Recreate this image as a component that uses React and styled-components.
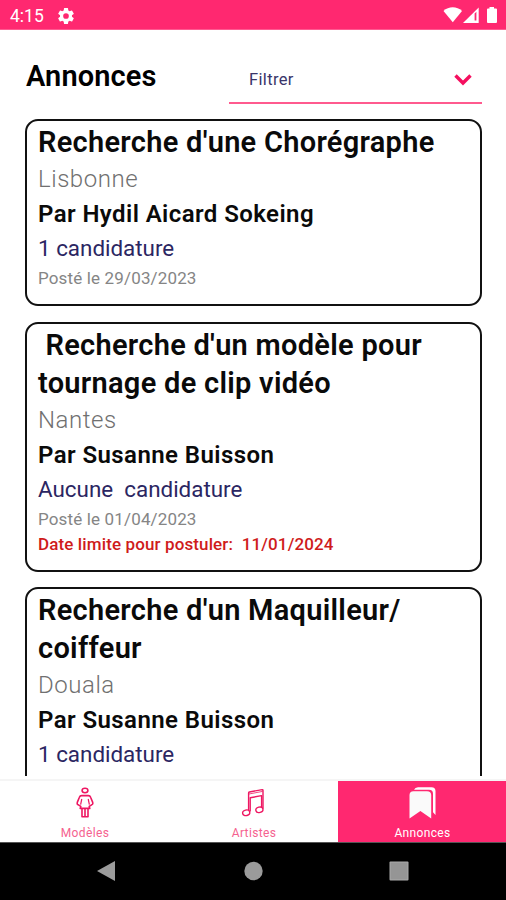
import React from "react";
import styled, { createGlobalStyle } from "styled-components";

const ads = [
  {
    title: "Recherche d'une Chorégraphe",
    city: "Lisbonne",
    author: "Hydil Aicard Sokeing",
    candidates: "1 candidature",
    posted: "29/03/2023",
  },
  {
    title: " Recherche d'un modèle pour\ntournage de clip vidéo",
    city: "Nantes",
    author: "Susanne Buisson",
    candidates: "Aucune  candidature",
    posted: "01/04/2023",
    deadline: "11/01/2024",
  },
  {
    title: "Recherche d'un Maquilleur/\ncoiffeur",
    city: "Douala",
    author: "Susanne Buisson",
    candidates: "1 candidature",
  },
];

const App = () => {
  return (
    <>
      <GlobalStyle />
      <Screen>
        <StatusBar>
          <Clock>4:15</Clock>
          <GearIcon />
          <StatusIcons />
        </StatusBar>
        <Header>
          <PageTitle>Annonces</PageTitle>
          <Filter>
            <span>Filtrer</span>
            <svg width="20" height="14" viewBox="0 0 20 14">
              <path d="M2.5 3.5 L10 11 L17.5 3.5" fill="none" stroke="#f50f5f" strokeWidth="3.4" />
            </svg>
          </Filter>
        </Header>
        <List>
          {ads.map((ad, index) => (
            <Card key={index}>
              <CardTitle>{ad.title}</CardTitle>
              <City>{ad.city}</City>
              <Author>Par {ad.author}</Author>
              <Candidates>{ad.candidates}</Candidates>
              {ad.posted && <Posted>Posté le {ad.posted}</Posted>}
              {ad.deadline && <Deadline>{"Date limite pour postuler:  " + ad.deadline}</Deadline>}
            </Card>
          ))}
        </List>
        <TabBar>
          <Tab>
            <WomanIcon />
            <TabLabel>Modèles</TabLabel>
          </Tab>
          <Tab>
            <MusicIcon />
            <TabLabel>Artistes</TabLabel>
          </Tab>
          <Tab $active>
            <BookmarksIcon />
            <TabLabel>Annonces</TabLabel>
          </Tab>
        </TabBar>
        <NavBar>
          <svg width="20" height="22" viewBox="0 0 20 22">
            <path d="M1 11 L19 1 V21 Z" fill="#9b9b9b" />
          </svg>
          <svg width="20" height="20" viewBox="0 0 20 20">
            <circle cx="10.5" cy="10" r="9.2" fill="#9b9b9b" />
          </svg>
          <svg width="20" height="20" viewBox="0 0 20 20">
            <rect x="0.5" y="0.5" width="19" height="19" rx="1" fill="#aaa" />
            <rect x="1.5" y="1.5" width="17" height="17" fill="#959595" />
          </svg>
        </NavBar>
      </Screen>
    </>
  );
};

const GearIcon = () => (
  <svg width="20" height="20" viewBox="0 0 24 24">
    <path
      fill="#fff"
      d="M19.14 12.94c.04-.3.06-.61.06-.94s-.02-.64-.07-.94l2.03-1.58a.49.49 0 0 0 .12-.61l-1.92-3.32a.49.49 0 0 0-.59-.22l-2.39.96c-.5-.38-1.03-.7-1.62-.94l-.36-2.54a.48.48 0 0 0-.48-.41h-3.84a.47.47 0 0 0-.47.41l-.36 2.54c-.59.24-1.13.57-1.62.94l-2.39-.96a.48.48 0 0 0-.59.22L2.74 8.87a.47.47 0 0 0 .12.61l2.03 1.58c-.05.3-.09.63-.09.94s.02.64.07.94l-2.03 1.58a.49.49 0 0 0-.12.61l1.92 3.32c.12.22.37.29.59.22l2.39-.96c.5.38 1.03.7 1.62.94l.36 2.54c.05.24.24.41.48.41h3.84c.24 0 .44-.17.47-.41l.36-2.54c.59-.24 1.13-.56 1.62-.94l2.39.96c.22.08.47 0 .59-.22l1.92-3.32a.47.47 0 0 0-.12-.61zM12 15.4a3.4 3.4 0 1 1 0-6.8 3.4 3.4 0 0 1 0 6.8z"
    />
  </svg>
);

// wifi, mobile signal and battery
const StatusIcons = () => (
  <StatusSvg width="56" height="20" viewBox="0 0 56 20">
    <path d="M0.5 6 C5.5 1 14 1 19 6 L9.8 17.3 Z" fill="#fff" />
    <path d="M20 18 L35.7 2.5 V18 Z" fill="#fff" />
    <path d="M31.6 8.5 L33.4 6.7 V15.6 H31.6 Z" fill="#ff2870" />
    <path d="M46.5 2 H51 V3.5 H53 Q54 3.5 54 4.5 V17 Q54 18 53 18 H45 Q44 18 44 17 V4.5 Q44 3.5 45 3.5 H46.5 Z" fill="#fff" />
  </StatusSvg>
);

const WomanIcon = () => (
  <svg width="32" height="34" viewBox="0 0 32 34" fill="none" stroke="#ee1762" strokeWidth="1.6" strokeLinejoin="round">
    <ellipse cx="16" cy="4.5" rx="2.9" ry="2.2" />
    <path d="M12.6 9.6 H19.4 Q21 9.6 21.6 11.3 L23.7 16.4 Q24.2 18.4 22.6 18.8 L20.2 20.4 L20.8 22.4 H11.2 L11.8 20.4 L9.4 18.8 Q7.8 18.4 8.3 16.4 L10.4 11.3 Q11 9.6 12.6 9.6 Z" />
    <path d="M12.8 13 L11.6 18.6 M19.2 13 L20.4 18.6" strokeWidth="1.2" />
    <path d="M13 22.4 V30.8 H19 V22.4 M16 22.6 V30.5" />
  </svg>
);

const MusicIcon = () => (
  <svg width="32" height="34" viewBox="0 0 32 34" fill="none" stroke="#ee1762" strokeWidth="1.4" strokeLinejoin="round">
    <path d="M10.6 24.6 V7 Q10.6 6.2 11.4 6 L24.2 3.6 Q25 3.5 25 4.4 V22.8" />
    <path d="M12.2 25.6 V11.8 L23.6 9.6 V21.4" />
    <path d="M11 8 L24.6 5.4" strokeWidth="0.8" />
    <ellipse cx="8.2" cy="26.8" rx="3.6" ry="2.8" transform="rotate(-15 8.2 26.8)" />
    <ellipse cx="21.4" cy="23.8" rx="3.6" ry="2.7" transform="rotate(-15 21.4 23.8)" />
  </svg>
);

const BookmarksIcon = () => (
  <svg width="32" height="34" viewBox="0 0 32 34">
    <path d="M8 3.8 Q9 1.2 12 1.2 H25.5 Q29.5 1.2 29.5 5 V29 L27 26.2 V8 Q27 3.8 23 3.8 Z" fill="#fff" />
    <path d="M3.5 9 Q3.5 5.2 7.5 5.2 H21 Q25.2 5.2 25.2 9 V32.5 L14.4 25 L3.5 32.5 Z" fill="#fafafa" />
  </svg>
);

const GlobalStyle = createGlobalStyle`
  * {
    box-sizing: border-box;
  }
  body {
    margin: 0;
    background: #fff;
    font-family: Roboto, sans-serif;
  }
`;

const Screen = styled.div`
  width: 506px;
  height: 900px;
  display: flex;
  flex-direction: column;
  overflow: hidden;
  background: #fff;
`;

const StatusBar = styled.div`
  display: flex;
  align-items: center;
  height: 30px;
  flex: none;
  padding: 2px 7px 0 10px;
  background: #ff2870;
  border-bottom: 1px solid #ff5a91;
`;

const Clock = styled.span`
  width: 46px;
  color: #fff;
  font-size: 17.5px;
`;

const StatusSvg = styled.svg`
  margin-left: auto;
  margin-bottom: 2px;
`;

const Header = styled.header`
  display: flex;
  justify-content: space-between;
  align-items: flex-start;
  height: 89px;
  flex: none;
  padding: 24px 24px 0 26px;
`;

const PageTitle = styled.h1`
  margin: 3px 0 0;
  font-size: 29px;
  line-height: 38px;
  font-weight: 600;
  letter-spacing: 0.1px;
`;

const Filter = styled.div`
  display: flex;
  justify-content: space-between;
  align-items: center;
  width: 253px;
  height: 50px;
  padding: 2px 9px 0 20px;
  border-bottom: 2px solid #ff5a8e;
  color: #3a366a;
  font-size: 16.5px;
  letter-spacing: 0.35px;
`;

const List = styled.main`
  display: flex;
  flex-direction: column;
  gap: 15.6px;
  height: 657px;
  flex: none;
  padding: 0 24px 0 25px;
  overflow: hidden;
`;

const Card = styled.article`
  flex: none;
  padding: 2px 10px 13px 11px;
  border: 2px solid #111;
  border-radius: 13px;
  white-space: pre;

  /* runs on under the tab bar */
  &:last-child {
    min-height: 225px;
  }
`;

const CardTitle = styled.h2`
  margin: 0;
  color: #0a0a0a;
  font-size: 29px;
  line-height: 38px;
  font-weight: 600;
  letter-spacing: 0.28px;
`;

const City = styled.p`
  margin: 0;
  color: #707070;
  font-size: 24px;
  line-height: 37px;
  font-weight: 300;
  letter-spacing: 0.55px;
`;

const Author = styled.p`
  margin: 0;
  color: #0a0a0a;
  font-size: 24px;
  line-height: 33px;
  font-weight: 600;
  letter-spacing: 0.42px;
`;

const Candidates = styled.p`
  margin: 0;
  color: #2b2662;
  font-size: 22.4px;
  line-height: 35px;
  letter-spacing: 0;
`;

const Posted = styled.p`
  margin: 0;
  color: #858585;
  font-size: 17px;
  line-height: 25px;
  letter-spacing: 0.15px;
`;

const Deadline = styled.p`
  margin: 0;
  color: #cf1b1b;
  font-size: 17px;
  line-height: 25px;
  font-weight: 500;
  letter-spacing: 0.12px;
`;

const TabBar = styled.nav`
  display: grid;
  grid-template-columns: 169px 169px 1fr;
  height: 66px;
  flex: none;
  padding-top: 5px;
  background: linear-gradient(#fff 3px, #f5f5f5 3px, #f5f5f5 5px, #fff 5px);
`;

const Tab = styled.div`
  display: flex;
  flex-direction: column;
  align-items: center;
  padding-top: 5px;
  background: ${(props) => (props.$active ? "#ff2870" : "#fff")};
  color: ${(props) => (props.$active ? "#fff" : "#f5628f")};
`;

const TabLabel = styled.span`
  margin-top: 6px;
  padding-left: 1px;
  font-size: 12px;
  line-height: 14px;
  letter-spacing: 0.35px;
`;

const NavBar = styled.div`
  display: flex;
  justify-content: space-between;
  align-items: center;
  flex: 1;
  padding: 0 97px 1px 96px;
  background: #000;
  border-top: 1px solid #555;
`;

export default App;
